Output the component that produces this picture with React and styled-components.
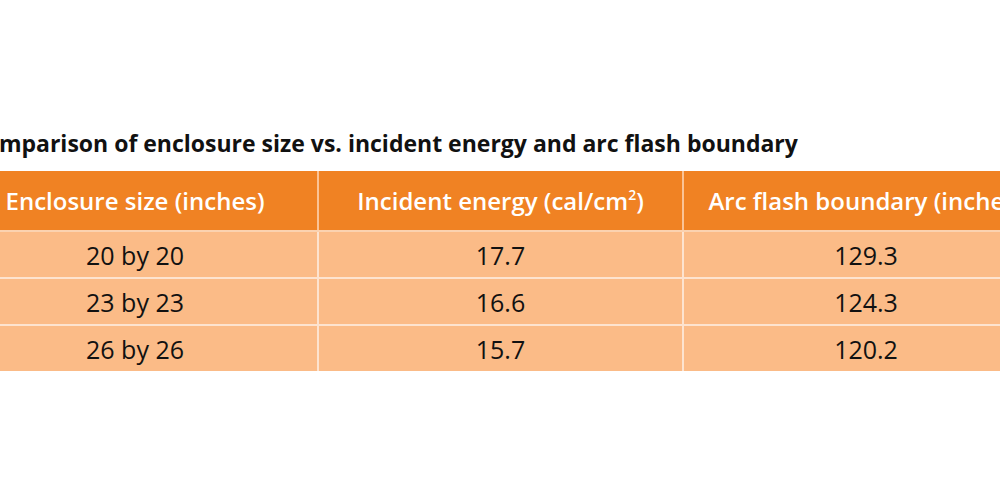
import React from 'react';
import styled, { createGlobalStyle } from 'styled-components';

const rows = [
  ['20 by 20', '17.7', '129.3'],
  ['23 by 23', '16.6', '124.3'],
  ['26 by 26', '15.7', '120.2'],
];

const App = () => (
  <Page>
    <GlobalStyle />
    <Title>Comparison of enclosure size vs. incident energy and arc flash boundary</Title>
    <Table>
      <thead>
        <tr>
          <HeadCell>Enclosure size (inches)</HeadCell>
          <HeadCell>Incident energy (cal/cm<sup>2</sup>)</HeadCell>
          <HeadCell>Arc flash boundary (inches)</HeadCell>
        </tr>
      </thead>
      <tbody>
        {rows.map((row) => (
          <tr key={row[0]}>
            {row.map((value, i) => <Cell key={i}>{value}</Cell>)}
          </tr>
        ))}
      </tbody>
    </Table>
  </Page>
);

const GlobalStyle = createGlobalStyle`
  html, body {
    margin: 0;
    background: #fff;
    overflow: hidden;
  }
`;

const Page = styled.div`
  width: 1000px;
  height: 500px;
  overflow: hidden;
  font-family: "Open Sans", "Noto Sans", sans-serif;
  padding-top: 128px;
  box-sizing: border-box;
`;

const Title = styled.h2`
  margin: 0 0 13px -30px;
  font-size: 23px;
  font-weight: 700;
  color: #111;
  white-space: nowrap;
  line-height: 30px;
`;

const Table = styled.table`
  margin-left: -47px;
  width: 1095px;
  table-layout: fixed;
  border-collapse: collapse;
`;

const HeadCell = styled.th`
  background: #f08223;
  color: #fff;
  font-weight: 600;
  font-size: 24px;
  height: 59px;
  padding: 0;
  text-align: center;
  border-left: 2px solid #fbc395;
  border-bottom: 2px solid #fbd2b0;
  white-space: nowrap;

  &:first-child {
    border-left: none;
  }

  sup {
    font-size: 14px;
    vertical-align: 10px;
    line-height: 0;
  }
`;

const Cell = styled.td`
  background: #fbbb87;
  color: #111;
  font-size: 25px;
  height: 45px;
  padding: 0;
  text-align: center;
  border-left: 2px solid #fde3cf;
  border-top: 2px solid #fde3cf;

  &:first-child {
    border-left: none;
  }
`;

export default App;
